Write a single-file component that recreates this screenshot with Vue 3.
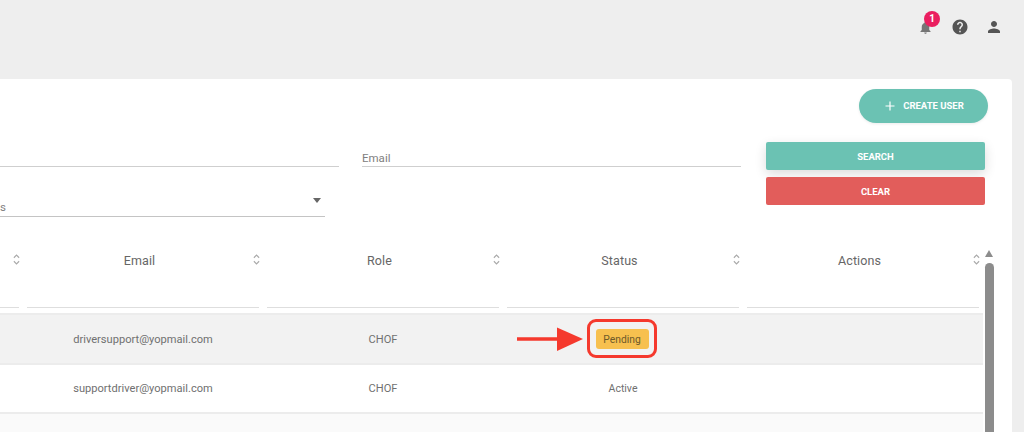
<script setup>
const heads = ['', 'Email', 'Role', 'Status', 'Actions']
const rows = [
  { email: 'driversupport@yopmail.com', role: 'CHOF', status: 'Pending', cls: 'shaded' },
  { email: 'supportdriver@yopmail.com', role: 'CHOF', status: 'Active', cls: '' }
]
</script>

<template>
  <div class="page">
    <header class="topbar">
      <div class="icon bell">
        <svg width="15" height="15" viewBox="0 0 24 24"><path fill="#757575" d="M12 22c1.1 0 2-.9 2-2h-4c0 1.100.9 2 2 2zm6-6v-5c0-3.070-1.640-5.640-4.500-6.320V4c0-.83-.67-1.500-1.500-1.500s-1.500.67-1.500 1.500v.68C7.630 5.360 6 7.920 6 11v5l-2 2v1h16v-1l-2-2z"/></svg>
        <span class="badge">1</span>
      </div>
      <div class="icon help">
        <svg width="18" height="18" viewBox="0 0 24 24"><path fill="#555" d="M12 2C6.480 2 2 6.480 2 12s4.480 10 10 10 10-4.480 10-10S17.520 2 12 2zm1 17h-2v-2h2v2zm2.070-7.750l-.9.920C13.450 12.900 13 13.500 13 15h-2v-.5c0-1.100.45-2.100 1.170-2.830l1.240-1.260c.37-.36.590-.86.590-1.410 0-1.100-.9-2-2-2s-2 .9-2 2H8c0-2.210 1.790-4 4-4s4 1.790 4 4c0 .88-.36 1.680-.93 2.250z"/></svg>
      </div>
      <div class="icon person">
        <svg width="18" height="18" viewBox="0 0 24 24"><path fill="#555" d="M12 12c2.210 0 4-1.790 4-4s-1.790-4-4-4-4 1.790-4 4 1.790 4 4 4zm0 2c-2.670 0-8 1.340-8 4v2h16v-2c0-2.660-5.330-4-8-4z"/></svg>
      </div>
    </header>

    <main class="card">
      <div class="create-row">
        <button class="create">
          <svg width="12" height="12" viewBox="0 0 12 12"><path d="M6 1.500v9M1.500 6h9" stroke="#fff" stroke-width="1.200" fill="none"/></svg>
          <span>CREATE USER</span>
        </button>
      </div>

      <div class="filters">
        <div class="fields">
          <div class="field first"></div>
          <div class="field email"><span>Email</span></div>
          <div class="field select">
            <span class="clip">s</span>
            <i class="caret"></i>
          </div>
        </div>
        <div class="actions">
          <button class="btn search">SEARCH</button>
          <button class="btn clear">CLEAR</button>
        </div>
      </div>

      <div class="table-wrap">
        <div class="table">
          <div class="grid head">
            <div v-for="(h, i) in heads" :key="i" class="th">
              <div class="th-top">
                <span class="th-label">{{ h }}</span>
                <svg class="sort" width="7" height="11" viewBox="0 0 8 12"><path d="M1 4l3-3 3 3M1 8l3 3 3-3" stroke="#aaa" stroke-width="1.300" fill="none"/></svg>
              </div>
              <div class="th-line"></div>
            </div>
          </div>
          <div v-for="r in rows" :key="r.email" class="grid row" :class="r.cls">
            <div class="td"></div>
            <div class="td">{{ r.email }}</div>
            <div class="td">{{ r.role }}</div>
            <div class="td">
              <span :class="r.status === 'Pending' ? 'pending' : 'status'">{{ r.status }}</span>
            </div>
            <div class="td"></div>
          </div>
          <div class="row-rest"></div>
        </div>
        <div class="scrollbar">
          <i class="up"></i>
          <i class="thumb"></i>
        </div>
      </div>
    </main>

    <svg class="arrow" width="70" height="28" viewBox="0 0 70 28">
      <path d="M2 14h44" stroke="#f5392d" stroke-width="3.500" fill="none"/>
      <path d="M42 2.500L68 14 42 26z" fill="#f5392d"/>
    </svg>
    <div class="ring"></div>
  </div>
</template>

<style>
html, body { margin: 0; background: #eeeeee; overflow: hidden; }
</style>

<style scoped>
.page {
  position: relative;
  width: 1024px;
  height: 432px;
  overflow: hidden;
  background: #eeeeee;
  font-family: Roboto, "Liberation Sans", sans-serif;
  color: #666;
}
.topbar {
  height: 79px;
  display: flex;
  justify-content: flex-end;
  align-items: flex-start;
  padding: 18px 21px 0 0;
  box-sizing: border-box;
  gap: 16px;
}
.icon { position: relative; width: 18px; height: 18px; display: flex; align-items: center; justify-content: center; }
.bell { left: -1px; }
.badge {
  position: absolute;
  left: 8px;
  top: -7px;
  width: 16px;
  height: 16px;
  border-radius: 50%;
  background: #ea1e5f;
  color: #fff;
  font-size: 10px;
  font-weight: 700;
  line-height: 16px;
  text-align: center;
}
.card {
  width: 1012px;
  height: 353px;
  background: #fff;
  border-radius: 0 4px 0 0;
  overflow: hidden;
}
.create-row { display: flex; justify-content: flex-end; padding: 10px 24px 0 0; }
.create {
  width: 129px;
  height: 34px;
  border: 0;
  border-radius: 17px;
  background: #6bc2b3;
  color: #fff;
  font: 700 9.500px/12px Roboto, sans-serif;
  display: flex;
  align-items: center;
  justify-content: center;
  gap: 7px;
  padding: 0 0 1px 1px;
  box-shadow: 0 1px 3px rgba(0,0,0,.08);
}
.filters { display: flex; margin-top: 19px; }
.fields {
  width: 741px;
  display: grid;
  grid-template-columns: 339px 379px;
  grid-template-rows: 25px 50px;
  column-gap: 23px;
}
.field { border-bottom: 1px solid #cfcfcf; font-size: 11.500px; color: #808080; position: relative; box-sizing: border-box; display: flex; align-items: flex-end; }
.field.email span { padding-bottom: 1px; }
.select { width: 325px; grid-column: 1; border-bottom-color: #c4c4c4; }
.clip { padding-bottom: 2px; }
.caret {
  position: absolute;
  right: 4px;
  top: 31px;
  border-left: 4.500px solid transparent;
  border-right: 4.500px solid transparent;
  border-top: 5px solid #666;
}
.actions { margin-left: 25px; width: 219px; display: flex; flex-direction: column; gap: 7px; }
.btn {
  height: 28px;
  border: 0;
  border-radius: 2px;
  color: #fff;
  font: 700 9.500px Roboto, sans-serif;
}
.search { background: #6bc2b3; box-shadow: 0 4px 12px rgba(0,0,0,.14); }
.clear { background: #e25d5b; }
.table-wrap { display: flex; margin-top: 19px; }
.table { width: 983px; flex: none; }
.grid { display: grid; grid-template-columns: 23px repeat(4, 240px); }
.head { height: 77px; }
.th { position: relative; display: flex; flex-direction: column; padding: 0 4px; box-sizing: border-box; }
.th:first-child { padding-left: 0; }
.th-top { height: 71px; padding: 0 7px 23px 0; box-sizing: border-box; display: flex; align-items: center; justify-content: center; position: relative; }
.th-label { font-size: 12.500px; color: #666; letter-spacing: .1px; }
.sort { position: absolute; right: -1px; top: 18px; }
.th-line { height: 1px; background: #dedede; }
.row {
  height: 50px;
  border-top: 2px solid #ececec;
  box-sizing: border-box;
  font-size: 11.100px;
  color: #707070;
}
.row + .row { height: 49px; }
.row.shaded { background: #f2f2f2; }
.td { display: flex; align-items: center; justify-content: center; }
.status { font-size: 10.500px; }
.pending {
  width: 53px;
  height: 20px;
  margin-right: 2px;
  background: #f7c04f;
  border-radius: 3px;
  color: #6e5a2a;
  display: flex;
  align-items: center;
  justify-content: center;
  font-size: 10.300px;
}
.row-rest { height: 30px; background: #fafafa; border-top: 2px solid #ececec; box-sizing: border-box; }
.scrollbar { margin-left: 1px; width: 10px; display: flex; flex-direction: column; align-items: center; margin-top: 14px; }
.up { width: 0; height: 0; border-left: 4.500px solid transparent; border-right: 4.500px solid transparent; border-bottom: 7px solid #8c8c8c; }
.thumb { width: 9px; height: 180px; margin-top: 6px; background: #8c8c8c; border-radius: 5px 5px 0 0; }
.arrow { position: absolute; left: 515px; top: 325px; }
.ring {
  position: absolute;
  left: 587px;
  top: 319px;
  width: 70px;
  height: 39px;
  box-sizing: border-box;
  border: 3.500px solid #f5392d;
  border-radius: 9px;
}
</style>
